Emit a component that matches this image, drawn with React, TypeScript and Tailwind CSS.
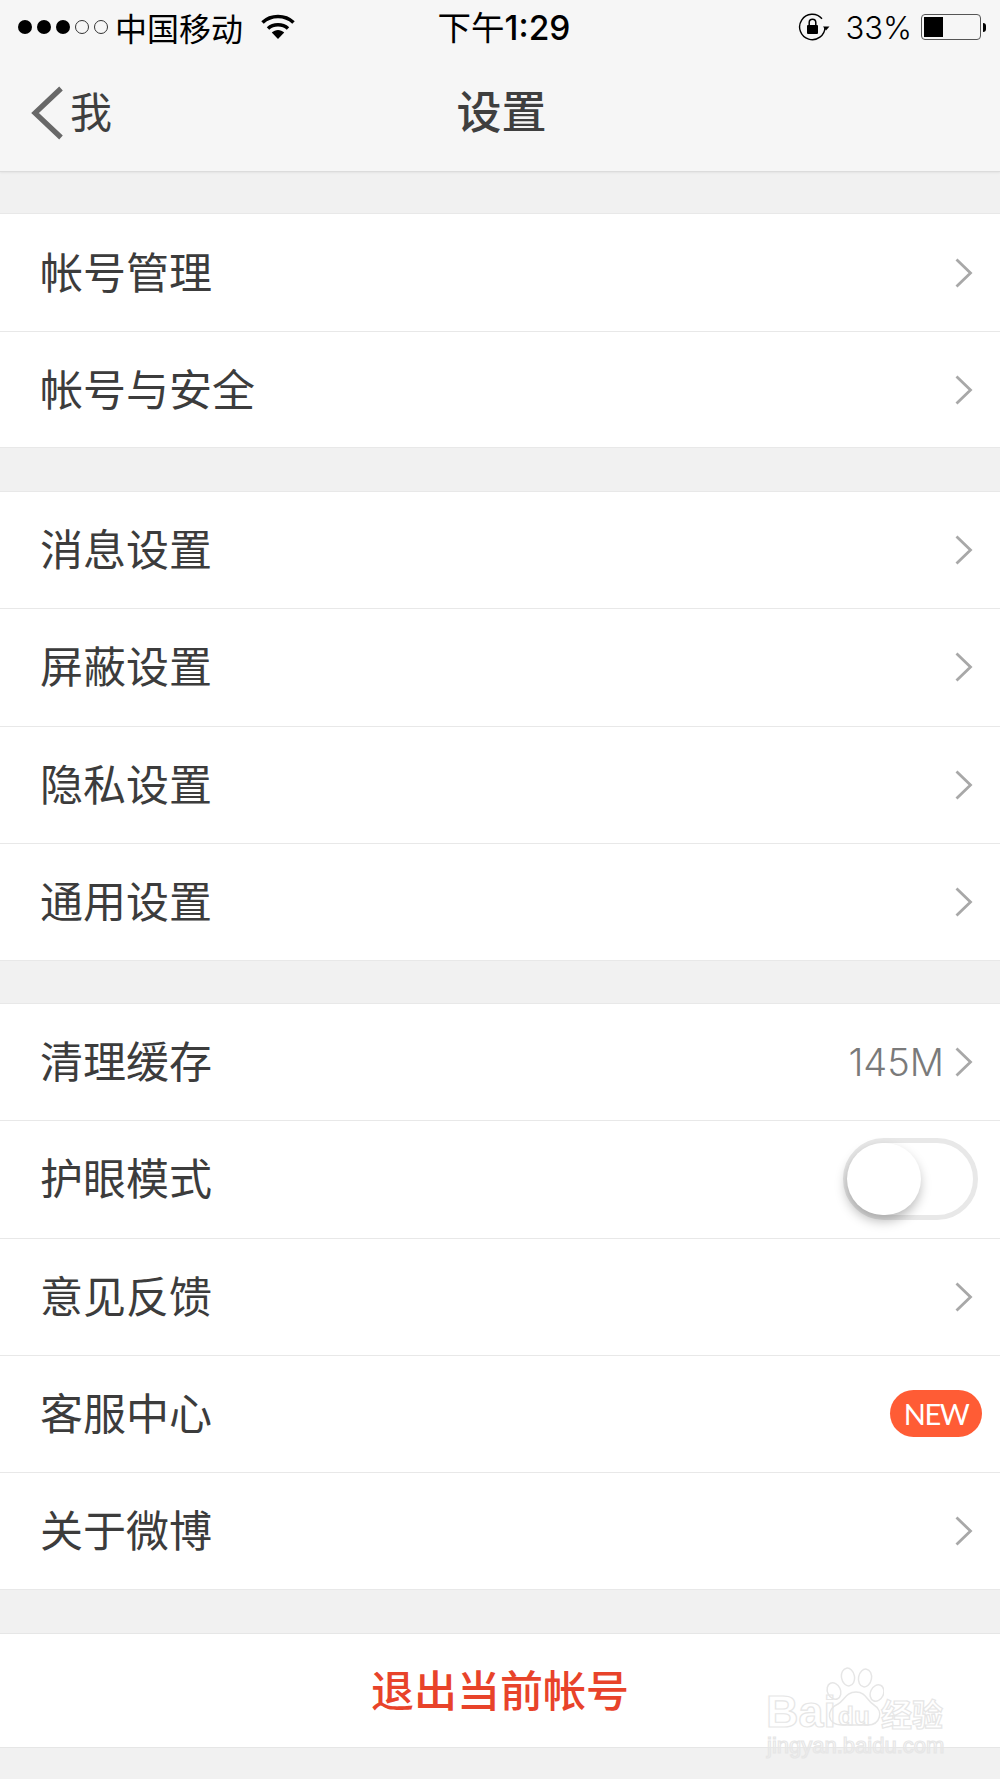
import React from "react";

const cjk = "font-['Noto_Sans_CJK_SC','Noto_Sans',sans-serif]";

function Chevron() {
  return (
    <svg width="20" height="32" viewBox="0 0 20 32" className="block shrink-0" fill="none">
      <path d="M2.5 2.5 L16.5 16 L2.5 29.5" stroke="#a8a8a8" strokeWidth="2.8" />
    </svg>
  );
}

function Row({ label, children, height = "h-[117.25px]" }: { label: string; children?: React.ReactNode; height?: string }) {
  return (
    <div className={`flex ${height} items-center justify-between border-t border-[#e8e8e8] bg-white pl-[40px]`}>
      <span className="pb-[5px] text-[43px] leading-none text-[#3c3c3c]">{label}</span>
      {children ?? (
        <div className="pr-[26px]">
          <Chevron />
        </div>
      )}
    </div>
  );
}

function Section({ children }: { children: React.ReactNode }) {
  return <div className="border-b border-[#e8e8e8] bg-white">{children}</div>;
}

function Dots() {
  return (
    <svg width="94" height="16" viewBox="0 0 94 16" className="block">
      <circle cx="8" cy="8" r="7" fill="#000" />
      <circle cx="27" cy="8" r="7" fill="#000" />
      <circle cx="46" cy="8" r="7" fill="#000" />
      <circle cx="65" cy="8" r="6.5" fill="none" stroke="#333" strokeWidth="1" />
      <circle cx="84" cy="8" r="6.5" fill="none" stroke="#333" strokeWidth="1" />
    </svg>
  );
}

function Wifi() {
  return (
    <svg width="34" height="26" viewBox="0 0 34 26" className="block" fill="none">
      <path d="M1.5 8.5 C10 0.5 24 0.5 32.5 8.5" stroke="#000" strokeWidth="3.6" />
      <path d="M7 14.5 C12.5 9.5 21.5 9.5 27 14.5" stroke="#000" strokeWidth="3.6" />
      <path d="M10.8 18.6 C14.5 15.2 19.5 15.2 23.2 18.6 L17 25 Z" fill="#000" />
    </svg>
  );
}

function RotationLock() {
  return (
    <svg width="32" height="28" viewBox="0 0 32 28" className="block" fill="none">
      <path d="M27 14 A12.7 12.7 0 1 1 24 5.8" stroke="#000" strokeWidth="1.4" />
      <path d="M25 13.5 L31.5 13.5 L28 17.5 Z" fill="#000" />
      <rect x="9" y="12" width="11" height="9" rx="1" fill="#000" />
      <path d="M11.2 12 V9.5 A3.3 3.3 0 0 1 17.8 9.5 V12" stroke="#000" strokeWidth="1.5" />
    </svg>
  );
}

function Battery() {
  return (
    <div className="flex items-center gap-[2px]">
      <div className="h-[26px] w-[60px] rounded-[4px] border border-[#555] p-[2px]">
        <div className="h-full w-[19px] bg-black" />
      </div>
      <div className="h-[9px] w-[3px] rounded-r-[3px] bg-black" />
    </div>
  );
}

function Watermark() {
  const stroke = "text-transparent [-webkit-text-stroke:1.2px_#e6e6e6]";
  return (
    <div className="pointer-events-none absolute left-[760px] top-[1665px] h-[100px] w-[200px]">
      <span className={`absolute left-[6px] top-[28px] font-['Liberation_Sans',sans-serif] text-[45px] font-bold leading-[38px] ${stroke}`}>Bai</span>
      <svg width="60" height="62" viewBox="0 0 60 62" className="absolute left-[64px] top-[2px]" fill="none" stroke="#e6e6e6" strokeWidth="1.5">
        <ellipse cx="10" cy="24" rx="6.5" ry="8.5" transform="rotate(-25 10 24)" />
        <ellipse cx="24" cy="10" rx="6.5" ry="9" transform="rotate(-10 24 10)" />
        <ellipse cx="41" cy="11" rx="6.5" ry="9" transform="rotate(10 41 11)" />
        <ellipse cx="53" cy="26" rx="6.5" ry="8.5" transform="rotate(25 53 26)" />
        <path d="M18 58 C2 58 2 42 14 37 C20 34 22 25 32 25 C42 25 43 34 50 38 C60 44 56 58 44 58 Z" />
      </svg>
      <span className={`absolute left-[78px] top-[38px] font-['Liberation_Sans',sans-serif] text-[26px] font-bold leading-none ${stroke}`}>du</span>
      <span className={`absolute left-[121px] top-[32px] text-[31px] font-bold leading-none ${stroke}`}>经验</span>
      <span className={`absolute left-[7px] top-[70px] font-['Liberation_Sans',sans-serif] text-[22px] leading-none ${stroke}`}>jingyan.baidu.com</span>
    </div>
  );
}

export default function App() {
  return (
    <div className={`relative h-[1779px] w-[1000px] overflow-hidden bg-[#f1f1f1] ${cjk}`}>
      <header className="h-[172px] border-b border-[#dcdcdc] bg-[#f6f6f6] shadow-[0_1px_2px_rgba(0,0,0,0.06)]">
        <div className="grid h-[54px] grid-cols-3 items-center">
          <div className="flex items-center pl-[17px]">
            <Dots />
            <span className="ml-[4px] text-[32px] leading-none text-black">中国移动</span>
            <div className="ml-[18px]">
              <Wifi />
            </div>
          </div>
          <div className="pl-[8px] text-center text-[33.5px] leading-none text-black">
            <span>下午</span>
            <span className="font-['Inter',sans-serif] font-medium">1:29</span>
          </div>
          <div className="flex items-center justify-end pr-[14px]">
            <RotationLock />
            <span className="ml-[15px] font-['Inter',sans-serif] text-[31px] font-light leading-none text-black">33%</span>
            <div className="ml-[9px]">
              <Battery />
            </div>
          </div>
        </div>
        <div className="grid h-[117px] grid-cols-3 items-center pb-[6px]">
          <div className="flex items-center pl-[31px]">
            <svg width="32" height="54" viewBox="0 0 32 54" className="mt-[6px] block" fill="none">
              <path d="M30 2.5 L4 27 L30 51.5" stroke="#686868" strokeWidth="5.2" />
            </svg>
            <span className="ml-[7px] text-[42px] leading-none text-[#3f3f3f]">我</span>
          </div>
          <div className="pl-[3px] text-center text-[45px] font-medium leading-none text-[#3f3f3f]">设置</div>
          <div />
        </div>
      </header>

      <div className="mt-[41px]">
        <Section>
          <Row label="帐号管理" height="h-[118px]" />
          <Row label="帐号与安全" height="h-[116px]" />
        </Section>
      </div>
      <div className="mt-[43px]">
        <Section>
          <Row label="消息设置" />
          <Row label="屏蔽设置" />
          <Row label="隐私设置" />
          <Row label="通用设置" />
        </Section>
      </div>
      <div className="mt-[42px]">
        <Section>
          <Row label="清理缓存">
            <div className="flex items-center gap-[10px] pr-[26px]">
              <span className="font-['Inter',sans-serif] text-[38px] font-light leading-none text-[#7a7a7a]">145M</span>
              <Chevron />
            </div>
          </Row>
          <Row label="护眼模式">
            <div className="pr-[22px]">
              <div className="relative h-[82px] w-[135px] rounded-full border-[5px] border-[#e8e8e8] bg-white">
                <div className="absolute left-[-1px] top-0 h-[72px] w-[74px] rounded-full bg-white shadow-[-1px_6px_12px_rgba(0,0,0,0.28)]" />
              </div>
            </div>
          </Row>
          <Row label="意见反馈" />
          <Row label="客服中心">
            <div className="pr-[18px]">
              <div className="flex h-[47px] w-[92px] items-center justify-center rounded-full bg-[#ff5c35] font-['Lato',sans-serif] text-[29px] font-normal leading-none tracking-[-1.5px] text-white">
                NEW
              </div>
            </div>
          </Row>
          <Row label="关于微博" />
        </Section>
      </div>
      <div className="mt-[43px] flex h-[115px] items-center justify-center border-y border-[#e6e6e6] bg-white pb-[5px] text-[43px] font-medium leading-none text-[#e8432a]">
        退出当前帐号
      </div>
      <Watermark />
    </div>
  );
}
